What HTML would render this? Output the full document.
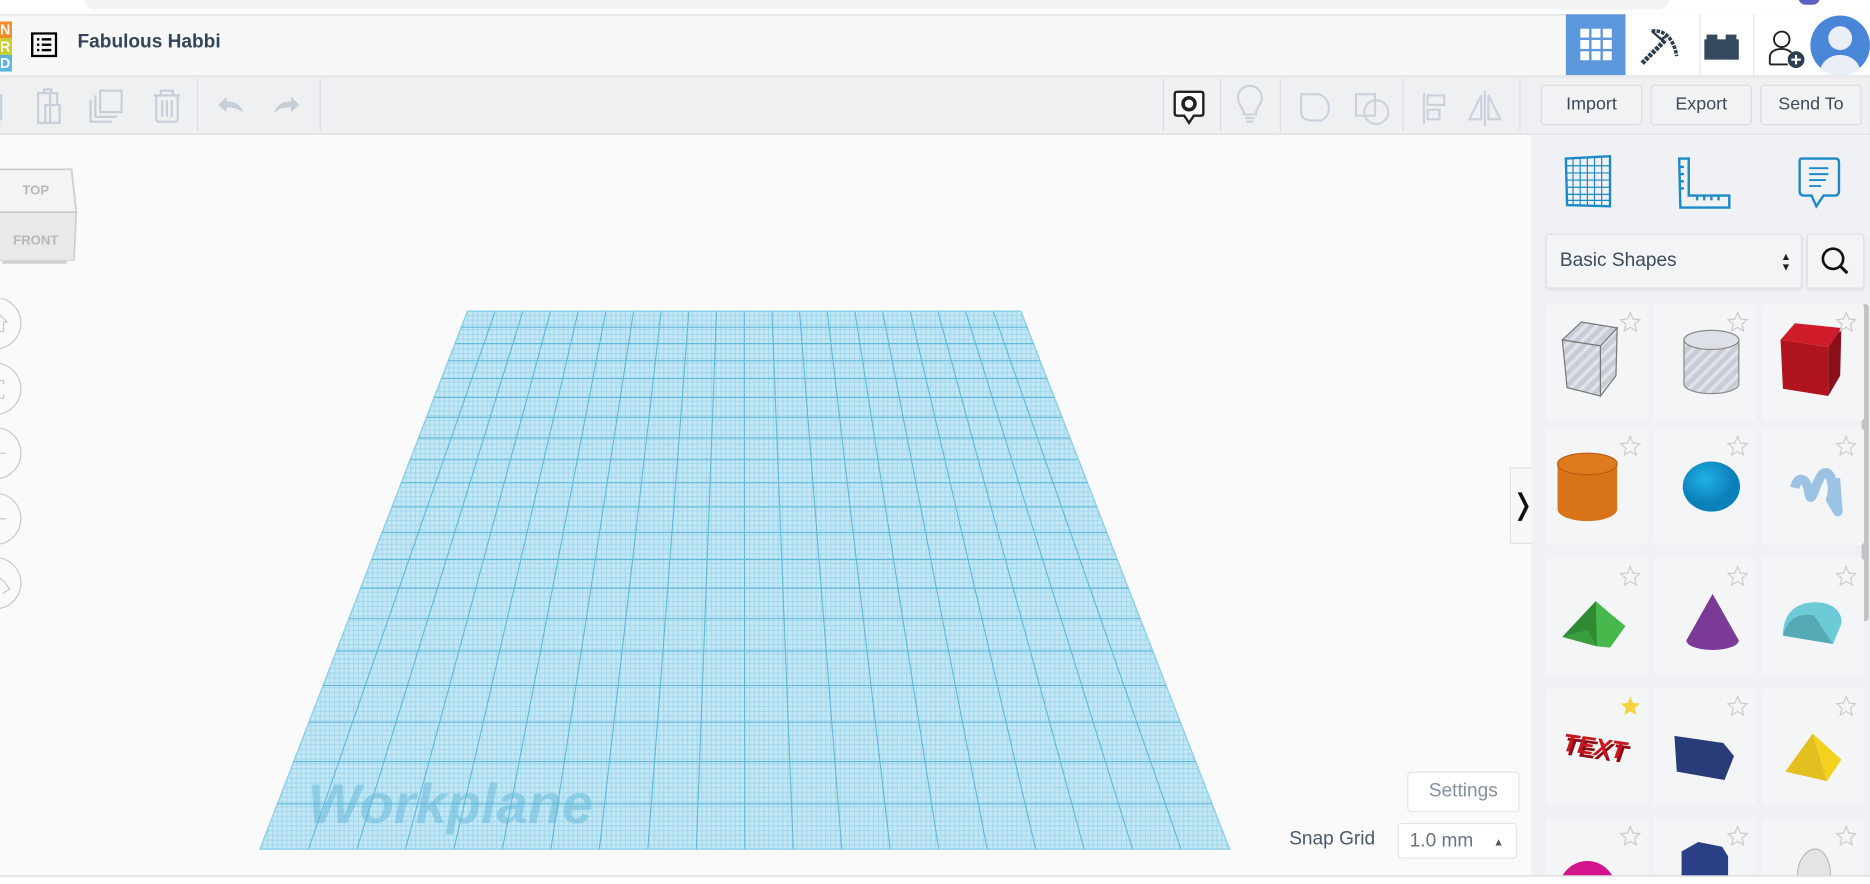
<!DOCTYPE html>
<html><head><meta charset="utf-8"><style>
html,body{margin:0;padding:0;width:1870px;height:882px;overflow:hidden;background:#fff;font-family:"Liberation Sans",sans-serif}
#w{position:absolute;left:0;top:0;width:1568px;height:740px;transform:scale(1.19260);transform-origin:0 0;background:#fafafa}
.a{position:absolute}
.btn{position:absolute;top:71px;height:32px;width:83px;border:1px solid #dcdde0;border-radius:3px;background:#f1f2f4;color:#3d4a5a;font-size:15px;text-align:center;line-height:32px}
.sep{position:absolute;top:66px;width:1px;height:44px;background:#dcdee2}
.tile{position:absolute;width:86px;height:98px;background:#f4f5f7;border-radius:3px}
.tile svg.st{position:absolute;right:6px;top:6px}
.tile svg.sh{position:absolute;left:0;top:0}
</style></head><body><div id="w">
<div class="a" style="left:0;top:0;width:1568px;height:12px;background:#fff"></div>
<div class="a" style="left:70px;top:-12px;width:1330px;height:20px;background:#f1f3f4;border-radius:10px"></div>
<div class="a" style="left:1508px;top:-8px;width:18px;height:12px;border-radius:9px;background:#5c5fc4"></div>
<div class="a" style="left:0;top:12px;width:1568px;height:51px;background:#f8f8f8;border-top:1px solid #dadce0;box-sizing:border-box"></div>
<div class="a" style="left:0;top:18px;width:10px;height:14px;background:#f28c28;color:#fff;font-weight:bold;font-size:12px;line-height:14px">N</div>
<div class="a" style="left:0;top:32px;width:10px;height:14px;background:#c9cf2a;color:#fff;font-weight:bold;font-size:12px;line-height:14px">R</div>
<div class="a" style="left:0;top:46px;width:10px;height:14px;background:#5bb3e0;color:#fff;font-weight:bold;font-size:12px;line-height:14px">D</div>
<svg class="a" style="left:26px;top:27px" width="22" height="21" viewBox="0 0 22 21"><rect x="1" y="1" width="20" height="19" fill="none" stroke="#000" stroke-width="2"/><g fill="#000"><rect x="5" y="5" width="2" height="2"/><rect x="9" y="5" width="8" height="2"/><rect x="5" y="9.5" width="2" height="2"/><rect x="9" y="9.5" width="8" height="2"/><rect x="5" y="14" width="2" height="2"/><rect x="9" y="14" width="8" height="2"/></g></svg>
<div class="a" style="left:65px;top:27px;font-size:16px;font-weight:bold;color:#34445a">Fabulous Habbi</div>
<div class="a" style="left:1313px;top:12px;width:50px;height:51px;background:#5b97db"></div>
<svg class="a" style="left:1325px;top:24px" width="27" height="27"><g fill="#fff"><rect x="0" y="0" width="7.5" height="7.5"/><rect x="9.5" y="0" width="7.5" height="7.5"/><rect x="19" y="0" width="7.5" height="7.5"/><rect x="0" y="9.5" width="7.5" height="7.5"/><rect x="9.5" y="9.5" width="7.5" height="7.5"/><rect x="19" y="9.5" width="7.5" height="7.5"/><rect x="0" y="19" width="7.5" height="7.5"/><rect x="9.5" y="19" width="7.5" height="7.5"/><rect x="19" y="19" width="7.5" height="7.5"/></g></svg>
<div class="a" style="left:1363px;top:12px;width:205px;height:51px;background:#fff"></div>
<div class="a" style="left:1425px;top:12px;width:1px;height:51px;background:#e5e5e5"></div>
<div class="a" style="left:1470px;top:12px;width:1px;height:51px;background:#e5e5e5"></div>
<svg class="a" style="left:1373px;top:23px" width="36" height="32" viewBox="0 0 36 32"><path d="M4 30 L24 10" stroke="#2c3e50" stroke-width="4" stroke-dasharray="3 1"/><path d="M12 3 C22 2 30 8 33 24" fill="none" stroke="#2c3e50" stroke-width="3" stroke-dasharray="3 1"/><path d="M12 3 L20 10 L26 6" fill="none" stroke="#2c3e50" stroke-width="2"/></svg>
<svg class="a" style="left:1429px;top:27px" width="30" height="24"><rect x="0" y="6" width="29" height="17" fill="#34495e"/><rect x="2" y="2" width="9" height="6" fill="#34495e"/><rect x="18" y="2" width="9" height="6" fill="#34495e"/></svg>
<svg class="a" style="left:1482px;top:24px" width="34" height="34" viewBox="0 0 34 34"><circle cx="12" cy="9" r="6.5" fill="none" stroke="#222" stroke-width="1.6"/><path d="M2 30 V24 C2 19 7 17 12 17 C15 17 18 18 20 20" fill="none" stroke="#222" stroke-width="1.6"/><path d="M2 30 H17" stroke="#222" stroke-width="1.6"/><circle cx="24" cy="26" r="7" fill="#2c3e50"/><path d="M24 22 V30 M20 26 H28" stroke="#fff" stroke-width="1.8"/></svg>
<svg class="a" style="left:1516px;top:13px" width="52" height="50"><defs><clipPath id="av"><circle cx="27" cy="25" r="25"/></clipPath></defs><circle cx="27" cy="25" r="25" fill="#4a86d8"/><g clip-path="url(#av)" fill="#e9eef7"><circle cx="27" cy="19" r="10"/><ellipse cx="27" cy="48" rx="17" ry="15"/></g></svg>
<div class="a" style="left:0;top:63px;width:1568px;height:50px;background:#eff0f2;border-bottom:1px solid #dcdde0;box-sizing:border-box;box-shadow:0 2px 2px rgba(0,0,0,0.04) inset"></div>
<div class="sep" style="left:165px"></div><div class="sep" style="left:268px"></div>
<div class="sep" style="left:975px"></div><div class="sep" style="left:1023px"></div><div class="sep" style="left:1073px"></div><div class="sep" style="left:1176px"></div><div class="sep" style="left:1274px"></div>
<svg class="a" style="left:0;top:70px" width="270" height="40" fill="none" stroke="#c6ced8" stroke-width="1.8"><rect x="-4" y="10" width="5" height="20"/><path d="M32 8 H37 V5 H43 V8 H48 V18"/><rect x="32" y="8" width="10" height="25"/><rect x="38" y="18" width="12" height="15"/><rect x="84" y="6" width="18" height="18"/><path d="M80 10 V28 H98"/><path d="M76 14 V32 H94"/><path d="M129 10 H151 M135 10 V6 H145 V10"/><rect x="131" y="10" width="18" height="22" rx="2"/><path d="M136 14 V28 M140 14 V28 M144 14 V28"/><path d="M183 18 L190 11 V15 C198 15 203 19 204 25 C201 21 196 20 190 20 V24 Z" fill="#c6ced8" stroke="none"/><path d="M251 18 L244 11 V15 C236 15 231 19 230 25 C233 21 238 20 244 20 V24 Z" fill="#c6ced8" stroke="none"/></svg>
<svg class="a" style="left:983px;top:74px" width="28" height="32" viewBox="0 0 28 32"><path d="M4 3 H24 Q26 3 26 5 V21 Q26 23 24 23 H18 L14 29 L10 23 H4 Q2 23 2 21 V5 Q2 3 4 3 Z" fill="#fff" stroke="#222" stroke-width="2"/><circle cx="14" cy="13" r="5" fill="none" stroke="#222" stroke-width="3"/></svg>
<svg class="a" style="left:1030px;top:70px" width="250" height="40" fill="none" stroke="#cbd2db" stroke-width="1.8"><path d="M13 26 C13 20 8 18 8 12 A10 10 0 0 1 28 12 C28 18 23 20 23 26 Z"/><path d="M14 29 H22 M15 32 H21"/><path d="M61 9 H76 A12 12 0 0 1 78 31 H71 Q61 31 61 24 Z"/><rect x="107" y="9" width="16" height="18"/><circle cx="124" cy="24" r="10"/><path d="M164 8 V34"/><rect x="167" y="10" width="14" height="8"/><rect x="167" y="22" width="10" height="8"/><path d="M215 6 V36 M212 30 L202 30 L212 10 Z M218 30 L228 30 L218 10 Z"/></svg>
<div class="btn" style="left:1292px">Import</div>
<div class="btn" style="left:1384px">Export</div>
<div class="btn" style="left:1476px">Send To</div>
<svg class="a" style="left:0;top:138px" width="70" height="86" viewBox="0 0 70 86"><path d="M-2 4 H60 L64 40 L62 80 H-2 Z" fill="#f4f4f4" stroke="#cfcfcf" stroke-width="1.5"/><path d="M-2 40 H64" stroke="#c8c8c8" stroke-width="1.5"/><path d="M0 41 H63 L61 80 H0Z" fill="#e9e9e9"/><path d="M2 82 H56" stroke="#ccc" stroke-width="2"/><text x="30" y="25" font-family="Liberation Sans" font-weight="bold" font-size="11" fill="#b8b8b8" text-anchor="middle">TOP</text><text x="30" y="67" font-family="Liberation Sans" font-weight="bold" font-size="11" fill="#b8b8b8" text-anchor="middle">FRONT</text></svg>
<svg class="a" style="left:0;top:250px" width="24" height="270" fill="none" stroke="#c8c8c8" stroke-width="1"><circle cx="-4" cy="21" r="21.5"/><circle cx="-4" cy="76" r="21.5"/><circle cx="-4" cy="130" r="21.5"/><circle cx="-4" cy="185" r="21.5"/><circle cx="-4" cy="239" r="21.5"/><path d="M0 14 L6 20 H3 V28 H0"/><path d="M0 69 H3 V72 M0 84 H3 V81"/><path d="M0 130 H5 M0 185 H5"/><path d="M0 235 L4 238 L8 244 L2 248"/></svg>
<svg class="a" style="left:0;top:0" width="1284" height="735"><defs><clipPath id="tp"><polygon points="392,261 856,261 1031,712 218,712"/></clipPath><pattern id="mn" width="4" height="4" patternUnits="userSpaceOnUse"><rect width="4" height="4" fill="#c4e8f5"/><path d="M0 0.5 H4 M0.5 0 V4" stroke="#9fd6ec" stroke-width="0.8"/></pattern></defs>
<polygon points="392,261 856,261 1031,712 218,712" fill="url(#mn)" stroke="#8fd0ea" stroke-width="1.2"/>
<g clip-path="url(#tp)" stroke="#55b3d6" stroke-width="0.9" opacity="0.9">
<path d="M0 674H1300M0 638.6H1300M0 605.6H1300M0 574.8H1300M0 545.9H1300M0 518.7H1300M0 493.2H1300M0 469.2H1300M0 446.5H1300M0 425.1H1300M0 404.8H1300M0 385.5H1300M0 367.2H1300M0 349.9H1300M0 333.3H1300M0 317.5H1300M0 302.5H1300M0 288.1H1300M0 274.4H1300"/>
<path d="M415.2 261L258.65 712M438.4 261L299.3 712M461.6 261L339.95 712M484.8 261L380.6 712M508 261L421.25 712M531.2 261L461.9 712M554.4 261L502.55 712M577.6 261L543.2 712M600.8 261L583.85 712M624 261L624.5 712M647.2 261L665.15 712M670.4 261L705.8 712M693.6 261L746.45 712M716.8 261L787.1 712M740 261L827.75 712M763.2 261L868.4 712M786.4 261L909.05 712M809.6 261L949.7 712M832.8 261L990.35 712"/>
</g>
<text x="258" y="690" font-family="Liberation Sans" font-weight="bold" font-style="italic" font-size="47" fill="#5ab4d8" opacity="0.45">Workplane</text>
</svg>
<div class="a" style="left:1180px;top:647px;width:92px;height:32px;border:1px solid #e3e4e6;border-radius:3px;background:#fff;color:#8590a0;font-size:16px;text-align:center;line-height:32px">Settings</div>
<div class="a" style="left:1081px;top:695px;color:#4a5a6c;font-size:16px">Snap Grid</div>
<div class="a" style="left:1172px;top:690px;width:100px;height:30px;border:1px solid #e3e4e6;border-radius:3px;background:#fff;color:#6a7480;font-size:16px;line-height:30px;box-sizing:border-box;padding-left:9px">1.0 mm<span style="position:absolute;right:10px;top:0;font-size:9px;color:#555">▲</span></div>
<div class="a" style="left:1284px;top:113px;width:284px;height:622px;background:#f0f1f4"></div>
<div class="a" style="left:1266px;top:392px;width:18px;height:62px;background:#f8f8f8;border:1px solid #e0e0e0;border-right:none;font-size:24px;line-height:62px;text-align:center;color:#111">❭</div>
<svg class="a" style="left:1310px;top:130px" width="48" height="48" fill="none" stroke="#1a8ac6" stroke-width="2"><path d="M3 3 L40 1 L40 43 L4 42 Z"/><path d="M3 9 H40 M3 15 H40 M3 21 H40 M3 27 H40 M3 33 H40 M3 38 H40 M9 2 V42 M15 2 V42 M21 2 V42 M27 2 V42 M33 2 V42" stroke-width="1"/></svg>
<svg class="a" style="left:1405px;top:130px" width="50" height="50" fill="none" stroke="#1a8ac6" stroke-width="2"><path d="M3 3 H11 V34 H45 V44 H4 Z"/><path d="M3 10 H7 M3 16 H7 M3 22 H7 M3 28 H7 M18 34 V38 M24 34 V38 M30 34 V38 M36 34 V38"/></svg>
<svg class="a" style="left:1505px;top:130px" width="40" height="48" fill="none" stroke="#1a8ac6" stroke-width="2"><path d="M5 3 H34 Q37 3 37 6 V30 Q37 34 33 34 H24 L18 43 L14 34 H8 Q4 34 4 30 V6 Q4 3 5 3Z"/><path d="M12 11 H28 M12 16 H28 M12 21 H26 M12 26 H22" stroke-width="1.6"/></svg>
<div class="a" style="left:1296px;top:196px;width:215px;height:46px;background:#f3f4f6;border:1px solid #e2e3e6;border-radius:3px;box-sizing:border-box;box-shadow:0 1px 2px rgba(0,0,0,0.08);font-size:16px;color:#3d4a5a;line-height:44px;padding-left:11px">Basic Shapes<span style="position:absolute;right:8px;top:0;font-size:9px;line-height:9px;padding-top:14px;color:#222">▲<br>▼</span></div>
<div class="a" style="left:1515px;top:196px;width:48px;height:46px;background:#f3f4f6;border:1px solid #e2e3e6;border-radius:3px;box-sizing:border-box;box-shadow:0 1px 2px rgba(0,0,0,0.08)"><svg width="46" height="44"><circle cx="21" cy="20" r="8.5" fill="none" stroke="#111" stroke-width="2.2"/><path d="M27 26 L33 32" stroke="#111" stroke-width="2.6"/></svg></div>
<div class="a" style="left:1561px;top:255px;width:6px;height:266px;background:#c2c2c2;border-radius:3px"></div>
<div class="tile" style="left:1296px;top:255px"><svg class="sh" width="86" height="98"><defs><pattern id="str" width="7" height="7" patternUnits="userSpaceOnUse" patternTransform="rotate(45)"><rect width="7" height="7" fill="#c8ccd4"/><rect width="3" height="7" fill="#dfe2e8"/></pattern></defs><path d="M14 30 L30 15 L60 20 L46 35 Z" fill="url(#str)" stroke="#777"/><path d="M14 30 L46 35 L46 77 L18 70 Z" fill="url(#str)" stroke="#777"/><path d="M46 35 L60 20 L59 60 L46 77 Z" fill="url(#str)" stroke="#777"/></svg><svg class="st" width="18" height="18"><path d="M9 1 L11.3 6.5 L17 7 L12.7 10.8 L14 16.5 L9 13.5 L4 16.5 L5.3 10.8 L1 7 L6.7 6.5 Z" fill="none" stroke="#ccc"/></svg></div>
<div class="tile" style="left:1386px;top:255px"><svg class="sh" width="86" height="98"><path d="M26 30 V67 A23 8 0 0 0 72 67 V30 Z" fill="url(#str)" stroke="#888"/><ellipse cx="49" cy="30" rx="23" ry="8" fill="#dde0e6" stroke="#888"/></svg><svg class="st" width="18" height="18"><path d="M9 1 L11.3 6.5 L17 7 L12.7 10.8 L14 16.5 L9 13.5 L4 16.5 L5.3 10.8 L1 7 L6.7 6.5 Z" fill="none" stroke="#ccc"/></svg></div>
<div class="tile" style="left:1477px;top:255px"><svg class="sh" width="86" height="98"><path d="M16 30 L28 16 L67 20 L56 36 Z" fill="#d01b2a"/><path d="M16 30 L56 36 L56 77 L18 71 Z" fill="#b0141f"/><path d="M56 36 L67 20 L66 60 L56 77 Z" fill="#8c0f18"/></svg><svg class="st" width="18" height="18"><path d="M9 1 L11.3 6.5 L17 7 L12.7 10.8 L14 16.5 L9 13.5 L4 16.5 L5.3 10.8 L1 7 L6.7 6.5 Z" fill="none" stroke="#ccc"/></svg></div>
<div class="tile" style="left:1296px;top:359px"><svg class="sh" width="86" height="98"><path d="M10 30 V68 A25 10 0 0 0 60 68 V30 Z" fill="#d8731a"/><ellipse cx="35" cy="30" rx="25" ry="9" fill="#e07a1e" stroke="#b85e10"/></svg><svg class="st" width="18" height="18"><path d="M9 1 L11.3 6.5 L17 7 L12.7 10.8 L14 16.5 L9 13.5 L4 16.5 L5.3 10.8 L1 7 L6.7 6.5 Z" fill="none" stroke="#ccc"/></svg></div>
<div class="tile" style="left:1386px;top:359px"><svg class="sh" width="86" height="98"><defs><radialGradient id="bl" cx="0.4" cy="0.35"><stop offset="0" stop-color="#22b0e4"/><stop offset="1" stop-color="#0a80b8"/></radialGradient></defs><ellipse cx="49" cy="49" rx="24" ry="21" fill="url(#bl)"/></svg><svg class="st" width="18" height="18"><path d="M9 1 L11.3 6.5 L17 7 L12.7 10.8 L14 16.5 L9 13.5 L4 16.5 L5.3 10.8 L1 7 L6.7 6.5 Z" fill="none" stroke="#ccc"/></svg></div>
<div class="tile" style="left:1477px;top:359px"><svg class="sh" width="86" height="98"><path d="M28 50 C30 40 38 40 40 55 C42 66 46 42 52 38 C58 34 62 50 58 60 L64 70 L62 42" fill="none" stroke="#9cc3e4" stroke-width="8" stroke-linejoin="round"/></svg><svg class="st" width="18" height="18"><path d="M9 1 L11.3 6.5 L17 7 L12.7 10.8 L14 16.5 L9 13.5 L4 16.5 L5.3 10.8 L1 7 L6.7 6.5 Z" fill="none" stroke="#ccc"/></svg></div>
<div class="tile" style="left:1296px;top:468px"><svg class="sh" width="86" height="98"><path d="M14 66 L42 36 L56 59 L43 74 Z" fill="#2f8a33"/><path d="M42 36 L56 48 L67 57 L54 75 L43 74 Z" fill="#47b84c"/><path d="M14 66 L43 74 L35 60 Z" fill="#3a9e3e"/></svg><svg class="st" width="18" height="18"><path d="M9 1 L11.3 6.5 L17 7 L12.7 10.8 L14 16.5 L9 13.5 L4 16.5 L5.3 10.8 L1 7 L6.7 6.5 Z" fill="none" stroke="#ccc"/></svg></div>
<div class="tile" style="left:1386px;top:468px"><svg class="sh" width="86" height="98"><path d="M50 30 L28 69 A22 8 0 0 0 72 69 Z" fill="#7a3a95"/></svg><svg class="st" width="18" height="18"><path d="M9 1 L11.3 6.5 L17 7 L12.7 10.8 L14 16.5 L9 13.5 L4 16.5 L5.3 10.8 L1 7 L6.7 6.5 Z" fill="none" stroke="#ccc"/></svg></div>
<div class="tile" style="left:1477px;top:468px"><svg class="sh" width="86" height="98"><path d="M18 65 C18 45 30 37 45 37 C60 37 68 45 67 55 L60 72 Z" fill="#6ccbd6"/><path d="M18 65 C22 50 32 46 44 48 L60 72 Z" fill="#55aab5"/></svg><svg class="st" width="18" height="18"><path d="M9 1 L11.3 6.5 L17 7 L12.7 10.8 L14 16.5 L9 13.5 L4 16.5 L5.3 10.8 L1 7 L6.7 6.5 Z" fill="none" stroke="#ccc"/></svg></div>
<div class="tile" style="left:1296px;top:577px"><svg class="sh" width="86" height="98"><text x="16" y="59" font-family="Liberation Sans" font-weight="bold" font-style="italic" font-size="21" fill="#8a0e14" transform="rotate(8 40 50)">TEXT</text><text x="14" y="56" font-family="Liberation Sans" font-weight="bold" font-style="italic" font-size="21" fill="#c8161e" transform="rotate(8 40 50)">TEXT</text></svg><svg class="st" width="18" height="18"><path d="M9 1 L11.3 6.5 L17 7 L12.7 10.8 L14 16.5 L9 13.5 L4 16.5 L5.3 10.8 L1 7 L6.7 6.5 Z" fill="#f9d33a"/></svg></div>
<div class="tile" style="left:1386px;top:577px"><svg class="sh" width="86" height="98"><path d="M18 40 L59 46 L68 57 L60 77 L20 70 Z" fill="#283c78"/></svg><svg class="st" width="18" height="18"><path d="M9 1 L11.3 6.5 L17 7 L12.7 10.8 L14 16.5 L9 13.5 L4 16.5 L5.3 10.8 L1 7 L6.7 6.5 Z" fill="none" stroke="#ccc"/></svg></div>
<div class="tile" style="left:1477px;top:577px"><svg class="sh" width="86" height="98"><path d="M43 38 L20 70 L55 78 Z" fill="#e3c020"/><path d="M43 38 L55 78 L67 60 Z" fill="#f2d21e"/></svg><svg class="st" width="18" height="18"><path d="M9 1 L11.3 6.5 L17 7 L12.7 10.8 L14 16.5 L9 13.5 L4 16.5 L5.3 10.8 L1 7 L6.7 6.5 Z" fill="none" stroke="#ccc"/></svg></div>
<div class="tile" style="left:1296px;top:686px;height:49px"><svg class="sh" width="86" height="49"><ellipse cx="35" cy="60" rx="24" ry="24" fill="#d4148c"/></svg><svg class="st" width="18" height="18"><path d="M9 1 L11.3 6.5 L17 7 L12.7 10.8 L14 16.5 L9 13.5 L4 16.5 L5.3 10.8 L1 7 L6.7 6.5 Z" fill="none" stroke="#ccc"/></svg></div>
<div class="tile" style="left:1386px;top:686px;height:49px"><svg class="sh" width="86" height="49"><path d="M24 28 L38 20 L58 24 L63 32 V49 H24 Z" fill="#2a3f86"/></svg><svg class="st" width="18" height="18"><path d="M9 1 L11.3 6.5 L17 7 L12.7 10.8 L14 16.5 L9 13.5 L4 16.5 L5.3 10.8 L1 7 L6.7 6.5 Z" fill="none" stroke="#ccc"/></svg></div>
<div class="tile" style="left:1477px;top:686px;height:49px"><svg class="sh" width="86" height="49"><path d="M30 49 C30 35 38 26 45 26 C52 26 58 35 58 49 Z" fill="#e4e4e4" stroke="#bbb"/></svg><svg class="st" width="18" height="18"><path d="M9 1 L11.3 6.5 L17 7 L12.7 10.8 L14 16.5 L9 13.5 L4 16.5 L5.3 10.8 L1 7 L6.7 6.5 Z" fill="none" stroke="#ccc"/></svg></div>
<div class="a" style="left:0;top:734px;width:1568px;height:6px;background:#fff;border-top:1px solid #d6d6d6"></div>
</div></body></html>
